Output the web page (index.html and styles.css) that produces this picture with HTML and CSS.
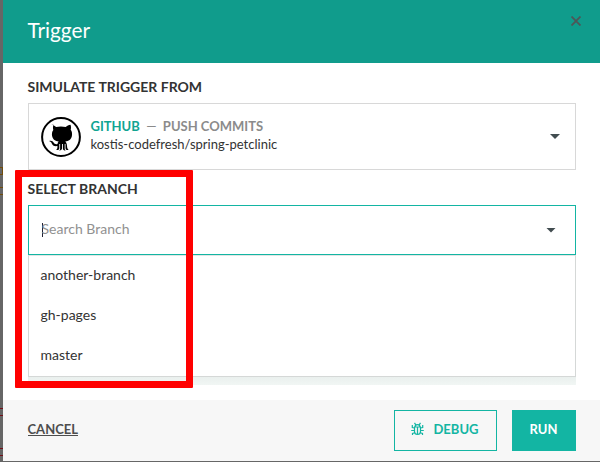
FILE: index.html
```html
<!DOCTYPE html>
<html lang="en">
<head>
<meta charset="utf-8">
<title>Trigger</title>
<link rel="stylesheet" href="styles.css">
</head>
<body>
<div class="backdrop">
  <i class="trace trace-a"></i>
  <i class="trace trace-b"></i>
  <i class="trace trace-c"></i>
  <i class="trace trace-d"></i>
</div>
<main class="modal">
  <header class="modal-header">
    <h1>Trigger</h1>
    <svg class="close" viewBox="0 0 10 10"><path d="M.5.5l9 9M9.5.5l-9 9"/></svg>
  </header>
  <section class="modal-body">
    <h2>SIMULATE TRIGGER FROM</h2>
    <div class="select">
      <svg class="octocat" viewBox="0 0 40 40">
        <circle cx="20" cy="20" r="18.9"/>
        <path d="M10.3 7.800c1.700 0 3.600 1.300 4.800 2.200 3-.7 6.600-.7 9.600 0 1.200-.9 3.100-2.200 4.800-2.200.7 1.700.6 3.800.2 5 1.300 1.700 1.600 3.800 1.200 6.100-.7 3.700-3.200 5.100-6.600 5.600.8.7 1.300 1.600 1.500 2.700l.4 3.400c.1 1 .8 1.800 1.500 2.400-1.900.2-3.200-.3-3.200-1.800v-4.200h-.8v4.500c0 1 .4 1.500.9 1.900-1.700 0-2.700-.6-2.700-2v-4.400h-.9v4.600c0 1.300-1.100 1.900-2.800 1.800.6-.4.9-.9.9-1.900v-4.500h-.8v4.200c0 1.500-1.300 2-3.200 1.800.8-.6 1.300-1.400 1.300-2.400v-1.500c-3.400.6-4.900-1-5.600-2.700-.6-1.100-1.300-1.700-2.700-2.300 2.300-.8 3.700.2 4.700 1.600.9 1.400 2.100 1.700 3.700 1.200.1-.8.500-1.700 1.200-2.300-3.400-.5-5.900-2-6.600-5.600-.4-2.300-.1-4.400 1.200-6.100-.4-1.200-.5-3.400.2-5.100z"/>
      </svg>
      <div class="trigger">
        <div class="trigger-title"><span class="provider">GITHUB</span><span class="dash">—</span><span>PUSH COMMITS</span></div>
        <div class="repo">kostis-codefresh/spring-petclinic</div>
      </div>
      <i class="caret"></i>
    </div>
    <h2>SELECT BRANCH</h2>
    <div class="search"><i class="cursor"></i><span class="placeholder">Search Branch</span><i class="caret"></i></div>
    <ul class="menu">
      <li>another-branch</li>
      <li>gh-pages</li>
      <li>master</li>
    </ul>
    <div class="menu-shade"></div>
  </section>
  <footer class="modal-footer">
    <a class="cancel">CANCEL</a>
    <div class="button debug">
      <svg class="bug" viewBox="0 0 13 14"><path d="M3.500 5h6v4.500a3 3 0 0 1-6 0zM4 5C4 1.800 9 1.800 9 5M6.500 5v7.500M4.800 2.800 3.500.8M8.200 2.800 9.500.8M3.500 6 1.300 5.500V3M9.500 6l2.200-.5V3M3.500 8.500H.2M9.500 8.500h3.300M3.800 10.800l-2.300.7V13M9.200 10.800l2.300.7V13"/></svg>
      <span>DEBUG</span>
    </div>
    <div class="button run">RUN</div>
  </footer>
</main>
<div class="highlight"></div>
</body>
</html>
```
FILE: styles.css
```css
* { box-sizing: border-box; }
body {
  margin: 0;
  width: 600px;
  height: 462px;
  overflow: hidden;
  background: #666;
  font-family: Lato, "Liberation Sans", sans-serif;
  font-size: 14px;
  color: #333;
}
.backdrop { position: absolute; inset: 0 auto 0 0; width: 3px; overflow: hidden; background: #666; }
.trace { position: absolute; left: 0; width: 3px; height: 8px; border: 1px solid #704c0b; border-left: 0; }
.trace-a { top: 167px; }
.trace-b { top: 187px; border-right: 0; }
.trace-c { top: 408px; border-color: #740e18; border-right: 0; }
.trace-d { top: 448px; border-color: #740e18; border-right: 0; }
.modal { position: relative; display: flex; flex-direction: column; height: 461px; margin-left: 3px; background: #fff; }
.modal-header { display: flex; justify-content: space-between; height: 63px; padding: 0 19px 0 24.5px; background: #109c8c; }
h1 { margin: 18px 0 0; font-size: 20.8px; line-height: 24px; font-weight: 400; color: #fff; }
.close { width: 10px; height: 10px; margin-top: 16px; fill: none; stroke: #4d5758; stroke-width: 1.8; }
.modal-body { flex: 1; padding: 15px 24px 0 25px; }
h2 { margin: 0 0 7px -0.5px; height: 18px; font-size: 14px; line-height: 18px; font-weight: 700; color: #333; }
.select { display: flex; align-items: center; height: 67px; margin-bottom: 10px; padding: 0 15px 0 12px; border: 1px solid #d8d8d8; }
.octocat { width: 40px; height: 40px; margin-right: 9.500px; }
.octocat circle { fill: none; stroke: #000; stroke-width: 2; }
.trigger { flex: 1; font-size: 13px; line-height: 18px; margin-top: -3px; }
.trigger-title { display: flex; font-weight: 700; color: #8b8b8b; }
.provider { color: #11a492; }
.dash { width: 10px; margin: 0 6.500px; font-weight: 400; text-align: center; }
.caret { width: 10px; height: 5px; background: #424d50; clip-path: polygon(0 0, 100% 0, 50% 100%); }
.search { display: flex; align-items: center; height: 50px; padding: 0 19px 0 12.500px; border: 1px solid #13b5a3; color: #919191; }
.cursor { width: 1px; height: 14px; margin-right: -1px; background: #223; }
.placeholder { flex: 1; margin-top: -3px; }
.menu { list-style: none; height: 122px; margin: 0; padding: 0 11.500px; border: 1px solid #d5d8d7; border-top-color: #e2e5e4; }
.menu li { height: 40px; line-height: 38px; }
.menu-shade { height: 8px; background: linear-gradient(#eaf0ee, #f1f6f4); }
.modal-footer { display: flex; align-items: flex-start; height: 61px; padding: 10px 24px 0 25px; background: #f7f7f7; font-weight: 700; font-size: 13px; }
.cancel { margin: 11px auto 0 -0.5px; line-height: 16px; color: #4d4d4d; border-bottom: 1px solid #4d4d4d; height: 15px; }
.button { display: flex; align-items: center; justify-content: center; height: 41px; padding: 0 1px 3px 0; }
.debug { width: 103px; margin-right: 15px; border: 1px solid #13b5a3; color: #13b5a3; }
.bug { width: 13px; height: 14px; margin-right: 9px; fill: none; stroke: currentColor; stroke-width: 1.2; }
.run { width: 64px; background: #13b5a3; color: #fff; }
.highlight { position: absolute; left: 15px; top: 170px; width: 178px; height: 218px; border: 7px solid #f00; border-radius: 1px; }
```
